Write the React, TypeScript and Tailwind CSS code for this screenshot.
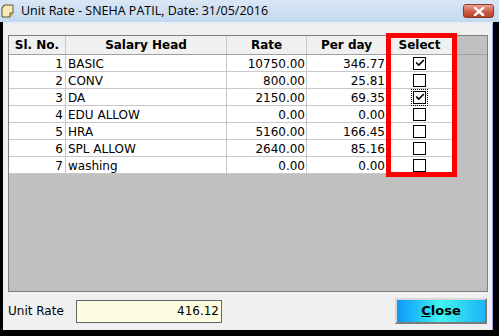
import { Check } from 'lucide-react'

const rows = [
  { no: 1, head: 'BASIC', rate: '10750.00', perDay: '346.77', selected: true },
  { no: 2, head: 'CONV', rate: '800.00', perDay: '25.81', selected: false },
  { no: 3, head: 'DA', rate: '2150.00', perDay: '69.35', selected: true, focus: true },
  { no: 4, head: 'EDU ALLOW', rate: '0.00', perDay: '0.00', selected: false },
  { no: 5, head: 'HRA', rate: '5160.00', perDay: '166.45', selected: false },
  { no: 6, head: 'SPL ALLOW', rate: '2640.00', perDay: '85.16', selected: false },
  { no: 7, head: 'washing', rate: '0.00', perDay: '0.00', selected: false },
]

function CheckBox({ checked, focus }: { checked: boolean; focus?: boolean }) {
  return (
    <div className={`flex h-[17px] w-[17px] items-center justify-center ${focus ? 'outline outline-1 outline-dotted outline-black -outline-offset-1' : ''}`}>
      <div className="flex h-[13px] w-[13px] items-center justify-center border border-black bg-white">
        {checked && <Check className="h-[10px] w-[10px] text-black" strokeWidth={4} />}
      </div>
    </div>
  )
}

function WindowIcon() {
  return (
    <svg width="13" height="14" viewBox="0 0 13 14">
      <path d="M3 1 H12 V9 L9 13 H1 V4 Z" fill="#f4e9b8" stroke="#6b5a2a" strokeWidth="1" />
      <path d="M1 4 Q3 3 3 1" fill="none" stroke="#6b5a2a" />
      <path d="M9 13 V9 H12" fill="#e0cf88" stroke="#6b5a2a" />
    </svg>
  )
}

export default function App() {
  return (
    <div className="relative flex h-[336px] w-[499px] flex-col overflow-hidden bg-black font-['DejaVu_Sans',sans-serif] text-[12px] text-black">
      {/* Title bar */}
      <div className="flex h-[22px] shrink-0 items-center bg-gradient-to-b from-[#d9e6f4] to-[#c4d8ee] pr-[5px]">
        <div className="ml-[1px] mr-[7px]">
          <WindowIcon />
        </div>
        <span className="font-['Open_Sans',sans-serif] text-[12.5px] leading-none">
          Unit Rate - SNEHA PATIL, Date: 31/05/2016
        </span>
        <div className="ml-auto flex h-[14px] w-[31px] items-center justify-center rounded-[3px] border border-[#8a3a2a] bg-gradient-to-b from-[#e8a393] via-[#d0624a] to-[#b8402a]">
          <svg width="12" height="9" viewBox="0 0 12 9">
            <path d="M2 1 L10 8 M10 1 L2 8" stroke="#ffffff" strokeWidth="2.4" strokeLinecap="square" />
          </svg>
        </div>
      </div>

      {/* Window body */}
      <div className="ml-[3px] mr-[6px] flex h-[308px] flex-col border-r border-t-[3px] border-r-[#9aa6e6] border-t-[#e8eef6] bg-[#f0f0f0] pl-[5px] pr-[3px]">
        {/* Grid */}
        <div className="mt-[10px] flex h-[257px] w-[480px] flex-col border border-[#808080] bg-[#c0c0c0]">
          <div className="flex h-[19px] border-b border-[#a0a0a0] font-bold">
            <div className="flex w-[57px] items-center justify-center border-r border-[#c8c8c8] bg-[#f0f0f0]">Sl. No.</div>
            <div className="flex w-[161px] items-center justify-center border-r border-[#c8c8c8] bg-[#f0f0f0]">Salary Head</div>
            <div className="flex w-[80px] items-center justify-center border-r border-[#c8c8c8] bg-[#f0f0f0]">Rate</div>
            <div className="flex w-[80px] items-center justify-center border-r border-[#c8c8c8] bg-[#f0f0f0]">Per day</div>
            <div className="flex w-[65px] items-center justify-center bg-[#f0f0f0]">Select</div>
          </div>
          {rows.map((r) => (
            <div key={r.no} className="flex h-[17px] leading-none">
              <div className="flex w-[57px] items-center justify-end border-b border-r border-[#c8c8c8] bg-white pr-[2px] pt-[1px]">{r.no}</div>
              <div className="flex w-[161px] items-center border-b border-r border-[#c8c8c8] bg-white pl-[2px] pt-[1px]">{r.head}</div>
              <div className="flex w-[80px] items-center justify-end border-b border-r border-[#c8c8c8] bg-white pr-[1px] pt-[1px]">{r.rate}</div>
              <div className="flex w-[80px] items-center justify-end border-b border-r border-[#c8c8c8] bg-white pr-[1px] pt-[1px]">{r.perDay}</div>
              <div className="flex w-[65px] items-center justify-center border-b border-[#c8c8c8] bg-white">
                <CheckBox checked={r.selected} focus={r.focus} />
              </div>
            </div>
          ))}
        </div>

        {/* Footer */}
        <div className="mt-[6px] flex items-center">
          <span className="w-[68px]">Unit Rate</span>
          <div className="flex h-[23px] w-[146px] items-center justify-end border border-[#646464] bg-[#fffde1] pr-[2px]">
            416.12
          </div>
          <button className="ml-auto mr-[2px] flex h-[26px] w-[92px] items-center justify-center border-2 border-b-[#7a7a7a] border-l-[#d8d8d8] border-r-[#7a7a7a] border-t-[#d8d8d8] bg-gradient-to-r from-[#1496f8] via-[#40f4ee] to-[#1eb4f4] text-[13px] font-bold">
            <span><span className="underline">C</span>lose</span>
          </button>
        </div>
      </div>

      {/* Red highlight around Select column */}
      <div className="pointer-events-none absolute left-[386px] top-[33px] h-[144px] w-[71px] border-[5px] border-[#ff0000]" />
    </div>
  )
}
